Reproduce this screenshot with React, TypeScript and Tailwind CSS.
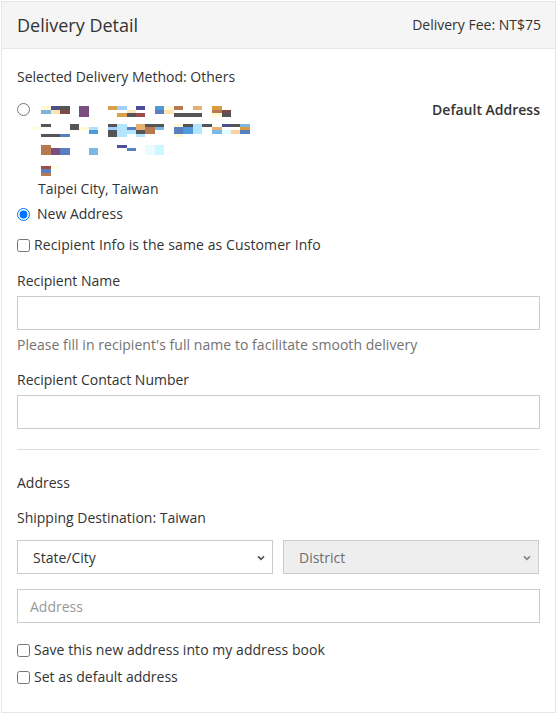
import React from "react";

const rects: [number, number, number, number, string][] = [
  // Row A
  [41, 105, 10, 4, "#fffad2"], [51, 105, 9, 4, "#4f4f88"], [60, 105, 10, 4, "#555555"],
  [41, 109, 10, 4, "#7bb6d8"], [51, 109, 9, 4, "#ffe3b3"], [60, 109, 10, 4, "#7b4a4a"],
  [79, 105, 10, 11, "#7a4f80"],
  [108, 105, 9, 4, "#d9a050"], [117, 105, 10, 4, "#a0d0ff"], [127, 109, 9, 4, "#ffe4b5"],
  [136, 105, 9, 4, "#4d4d99"], [117, 112, 10, 4, "#d9a050"], [127, 112, 9, 4, "#555555"],
  [136, 112, 9, 4, "#9a4d4d"],
  [155, 105, 9, 4, "#4f9ad8"], [155, 109, 9, 4, "#5a7fc0"], [164, 105, 10, 4, "#fffad8"],
  [164, 109, 10, 4, "#ffe4b5"], [174, 105, 9, 4, "#b87850"], [193, 105, 9, 4, "#e8b070"],
  [174, 112, 28, 4, "#555555"],
  [212, 105, 10, 4, "#d99a40"], [212, 109, 10, 4, "#b87850"], [212, 112, 10, 4, "#fffad2"],
  [222, 109, 9, 4, "#7a4a4a"], [222, 112, 9, 4, "#555555"],
  // Row B
  [32, 126, 9, 3, "#fffde0"], [41, 123, 10, 3, "#555555"], [41, 133, 19, 3, "#555555"],
  [60, 133, 10, 3, "#5a7fc0"], [70, 123, 9, 6, "#555555"], [79, 126, 10, 3, "#fffad2"],
  [89, 126, 9, 3, "#b0e0ff"], [89, 129, 9, 4, "#4f9ad8"],
  [108, 123, 9, 3, "#555555"], [108, 126, 9, 3, "#a0d0ff"], [108, 129, 9, 7, "#555555"],
  [117, 123, 10, 13, "#b3e5ff"], [127, 126, 9, 3, "#5a7fc0"], [127, 129, 9, 4, "#b3e5ff"],
  [136, 123, 9, 6, "#e8b070"], [136, 129, 9, 4, "#555555"], [136, 133, 9, 3, "#b3e5ff"],
  [145, 123, 10, 3, "#555555"], [145, 126, 10, 7, "#b87850"],
  [155, 123, 9, 3, "#555555"], [155, 126, 9, 3, "#7ab8e8"],
  [174, 123, 9, 3, "#fffad2"], [174, 126, 9, 7, "#5a7fc0"], [174, 133, 9, 3, "#fffad2"],
  [183, 123, 10, 3, "#555555"], [183, 126, 10, 7, "#4f9ad8"], [193, 123, 9, 10, "#b3e5ff"],
  [202, 123, 10, 3, "#555555"], [212, 126, 10, 3, "#e8b070"], [212, 129, 10, 4, "#7ab8e8"],
  [222, 123, 9, 3, "#4f4f88"], [222, 129, 9, 4, "#e0ffff"], [231, 123, 9, 3, "#555555"],
  [231, 129, 9, 4, "#ffd0a0"], [240, 123, 10, 3, "#7ab8e8"], [240, 126, 10, 3, "#d99a40"],
  [240, 129, 10, 4, "#5a7fc0"],
  // Row C
  [41, 144, 10, 10, "#b87850"], [51, 147, 9, 7, "#7a4f80"], [60, 147, 10, 7, "#5a7fc0"],
  [89, 147, 9, 7, "#7ab8e8"], [117, 144, 10, 3, "#4f4f99"], [127, 147, 9, 3, "#5a7fc0"],
  [145, 144, 10, 10, "#e8fcff"], [155, 144, 9, 10, "#ccf8ff"],
  // Row D
  [41, 165, 10, 3, "#9a4d4d"], [41, 168, 10, 4, "#5a7fc0"], [41, 172, 10, 3, "#b87850"],
  [51, 165, 9, 3, "#fffde0"],
];

function Chevron({ color }: { color: string }) {
  return (
    <svg width="8" height="6" viewBox="0 0 8 6" className="absolute right-[7px] top-[14px] pointer-events-none">
      <path d="M1 1.3 L4 4.3 L7 1.3" fill="none" stroke={color} strokeWidth="1.7" />
    </svg>
  );
}

export default function App() {
  const font = { fontFamily: '"Open Sans", "Noto Sans", sans-serif' };
  return (
    <div className="bg-white pl-px pt-px" style={font}>
      <div className="w-[555px] h-[712px] border border-[#e6e6e6] text-[14px] text-[#333] leading-5">
        <div className="h-[47px] bg-[#f5f5f5] border-b border-[#e6e6e6] flex items-center justify-between pl-[15px] pr-[14px]">
          <span className="text-[18px] text-[#333]">Delivery Detail</span>
          <span className="text-[14px] text-[#333]">Delivery Fee: NT$75</span>
        </div>
        <div className="px-[15px] pt-[18px]">
          <p>Selected Delivery Method: Others</p>

          <div className="mt-[14px] flex">
            <input type="radio" name="addr" className="m-0 mt-[2px] w-[13px] h-[13px] shrink-0" />
            <div className="flex-1">
              <svg width="230" height="78" viewBox="30 100 230 78" className="block">
                {rects.map(([x, y, w, h, c], i) => (
                  <rect key={i} x={x} y={y} width={w} height={h} fill={c} />
                ))}
              </svg>
              <p className="pl-[8px]">Taipei City, Taiwan</p>
            </div>
            <span className="font-semibold text-[#333] -mt-px">Default Address</span>
          </div>

          <label className="mt-[5px] flex items-center">
            <input type="radio" name="addr" defaultChecked className="m-0 w-[13px] h-[13px]" />
            <span className="ml-[7px]">New Address</span>
          </label>

          <label className="mt-[11px] flex items-center">
            <input type="checkbox" className="m-0 w-[13px] h-[13px]" />
            <span className="ml-[4px] tracking-[0.1px]">Recipient Info is the same as Customer Info</span>
          </label>

          <p className="mt-4">Recipient Name</p>
          <input type="text" className="mt-[5px] block w-full h-[34px] border border-[#cccccc] outline-none px-3" />
          <p className="mt-[5px] text-[#737373] tracking-[0.05px]">Please fill in recipient's full name to facilitate smooth delivery</p>

          <p className="mt-[15px]">Recipient Contact Number</p>
          <input type="text" className="mt-[5px] block w-full h-[34px] border border-[#cccccc] outline-none px-3" />

          <div className="mt-[20px] border-t border-[#dddddd]" />

          <p className="mt-[23px]">Address</p>
          <p className="mt-[15px]">Shipping Destination: Taiwan</p>

          <div className="mt-3 flex gap-[10px]">
            <div className="relative w-[256px] h-[34px] border border-[#cccccc] bg-white flex items-center pl-[15px] pt-px text-[#333]">
              State/City
              <Chevron color="#555" />
            </div>
            <div className="relative w-[256px] h-[34px] border border-[#cccccc] bg-[#eeeeee] flex items-center pl-[15px] pt-px text-[#6f6f6f]">
              District
              <Chevron color="#888" />
            </div>
          </div>

          <div className="mt-[15px] h-[34px] border border-[#cccccc] flex items-center pl-[12px] pt-px text-[#999]">
            Address
          </div>

          <label className="mt-[17px] flex items-center">
            <input type="checkbox" className="m-0 w-[13px] h-[13px]" />
            <span className="ml-[4px] tracking-[0.05px]">Save this new address into my address book</span>
          </label>
          <label className="mt-[7px] flex items-center">
            <input type="checkbox" className="m-0 w-[13px] h-[13px]" />
            <span className="ml-[4px]">Set as default address</span>
          </label>
        </div>
      </div>
    </div>
  );
}
